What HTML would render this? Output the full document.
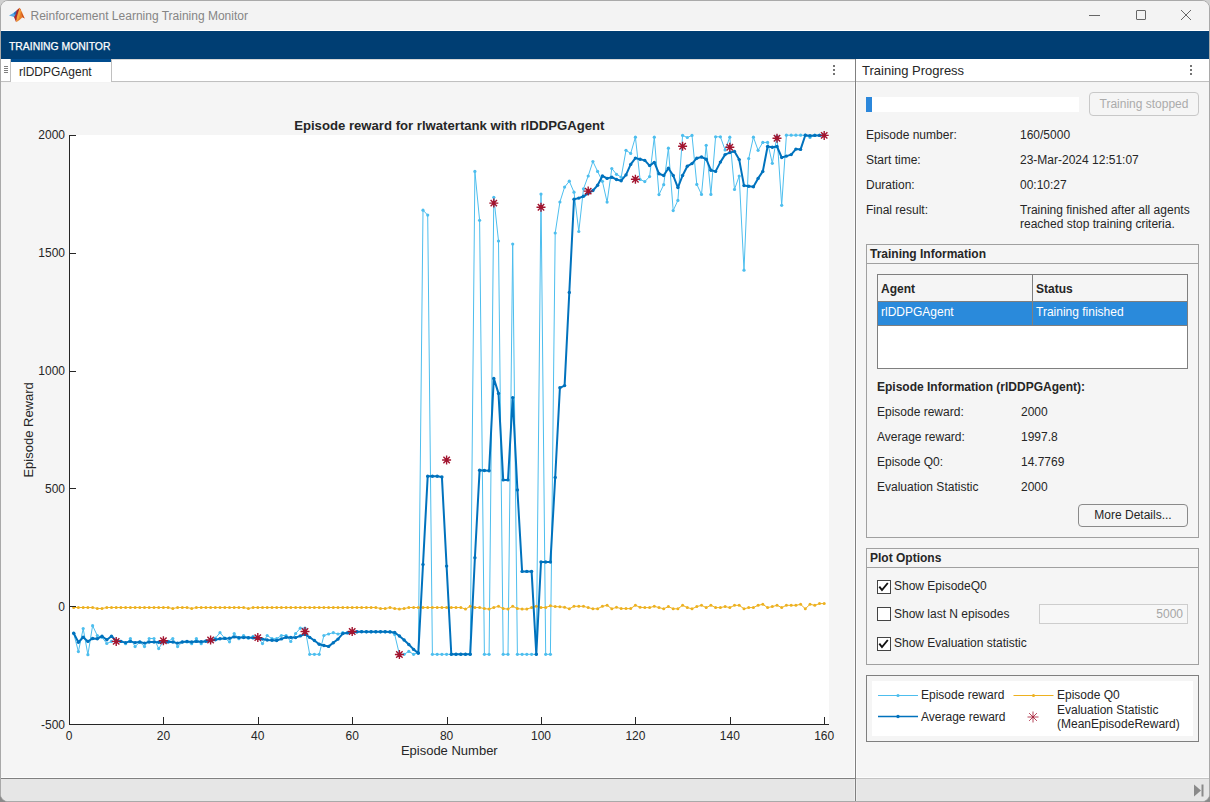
<!DOCTYPE html>
<html><head><meta charset="utf-8">
<style>
*{box-sizing:border-box;margin:0;padding:0}
html,body{width:1210px;height:802px;overflow:hidden;background:linear-gradient(#d0d0d0,#8a8a8a);font-family:"Liberation Sans",sans-serif;color:#262626}
.a{position:absolute}
.win{position:absolute;left:0;top:0;width:1210px;height:802px;border:1px solid #a9a9a9;border-radius:8px;background:#f3f3f3;overflow:hidden}
.t12{font-size:12px;white-space:nowrap;line-height:14px}
.t13{font-size:13px;white-space:nowrap;line-height:15px}
.panel{position:absolute;border:1px solid #a0a0a0;background:#f5f5f5}
.ptitle{position:absolute;left:0;top:0;right:0;height:19px;border-bottom:1px solid #a0a0a0;font-weight:bold;font-size:12px;padding-left:3px;line-height:18px;white-space:nowrap}
.cb{position:absolute;width:14px;height:14px;border:1px solid #444;background:#fff}
.btn{position:absolute;border:1px solid #a9a9a9;border-radius:4px;background:#f5f5f5;font-size:12px;text-align:center;white-space:nowrap}
</style></head><body>
<div class="win">
  <!-- title bar -->
  <div class="a" style="left:0;top:0;width:1208px;height:29px;background:#f3f3f3"></div>
  <svg class="a" style="left:6.25px;top:5px" width="20" height="18" viewBox="0 0 20 18">
    <path d="M2 9.6 L6.5 7 L9 6.6 L11 7.5 L8 11.5 L5.5 10.5 Z" fill="#55a8e6"/>
    <path d="M6.5 7 L9.5 4.5 L11 7.5 L8 9 Z" fill="#2d6fb8"/>
    <path d="M9.5 4.5 L12.6 1.8 L14 4 L11.5 10 L9 16 L7 11 L9 8 Z" fill="#a8282e"/>
    <path d="M12.6 1.8 L15 6 L17.7 12.6 L15.5 11.2 L12.5 14 L9.2 16.2 L11 10 Z" fill="#e9802a"/>
    <path d="M12.6 1.8 L13.8 5.5 L12 12 L9.2 16.2 L9.8 11 Z" fill="#f3a33d"/>
    <path d="M13.8 5.5 L17.7 12.6 L15.5 11.2 Z" fill="#c94a22"/>
  </svg>
  <div class="a" style="left:29.5px;top:8px;font-size:12px;color:#858585;white-space:nowrap">Reinforcement Learning Training Monitor</div>
  <div class="a" style="left:1088px;top:14px;width:11px;height:1px;background:#666"></div>
  <div class="a" style="left:1134.5px;top:9px;width:10px;height:10px;border:1px solid #666;border-radius:1px"></div>
  <svg class="a" style="left:1179.3px;top:7.5px" width="12" height="12"><path d="M1 1L11 11M11 1L1 11" stroke="#666" stroke-width="1"/></svg>
  <div class="a" style="left:0;top:29px;width:1208px;height:1px;background:#ffffff"></div>
  <!-- header -->
  <div class="a" style="left:0;top:30px;width:1208px;height:28px;background:#003e73"></div>
  <div class="a" style="left:8px;top:40px;font-size:10.4px;color:#fff;white-space:nowrap;-webkit-text-stroke:0.25px #fff">TRAINING MONITOR</div>
  <!-- tab strip left -->
  <div class="a" style="left:0;top:58px;width:854px;height:23px;background:#fff;border-bottom:1px solid #c8c8c8"></div>
  <div class="a" style="left:0;top:58px;width:10px;height:23px;background:#fff;border-right:1px solid #c0c0c0;border-bottom:1px solid #c0c0c0"></div>
  <div class="a" style="left:3px;top:65px;width:4px;height:1px;background:#808080;box-shadow:0 2px 0 #808080,0 4px 0 #808080,0 6px 0 #808080"></div>
  <div class="a" style="left:10px;top:58px;width:100px;height:23px;background:#fff;border-top:3px solid #004c8f"></div>
  <div class="a t12" style="left:18px;top:64px">rlDDPGAgent</div>
  <div class="a" style="left:110px;top:58px;width:744px;height:23px;border-left:1px solid #c0c0c0;border-bottom:1px solid #c0c0c0;border-top:1px solid #d8d8d8"></div>
  <div class="a" style="left:832px;top:64px;width:2px;height:2px;background:#747474;box-shadow:0 4px 0 #747474,0 8px 0 #747474"></div>
  <!-- left content -->
  <div class="a" style="left:0;top:82px;width:854px;height:695px;background:#f5f5f5"></div>
  <svg width="1210" height="802" style="position:absolute;left:-1px;top:-1px">
<rect x="70" y="135" width="759" height="589" fill="#fff"/>
<polyline points="73.7,633.3 78.4,651.6 83.2,628.6 87.9,654.7 92.6,625.7 97.3,635.6 102.0,637.3 106.8,643.5 111.5,641.4 116.2,641.4 120.9,641.4 125.6,643.7 130.4,638.5 135.1,646.6 139.8,642.0 144.5,646.6 149.2,638.5 154.0,638.5 158.7,648.6 163.4,641.4 168.1,641.4 172.8,638.5 177.6,646.6 182.3,642.0 187.0,642.0 191.7,643.7 196.4,638.5 201.2,643.7 205.9,640.9 210.6,640.0 215.3,638.2 220.0,632.7 224.8,638.2 229.5,641.8 234.2,633.6 238.9,638.7 243.6,635.5 248.4,638.2 253.1,636.4 257.8,637.3 262.5,643.6 267.2,635.5 272.0,638.7 276.7,638.7 281.4,635.5 286.1,635.5 290.8,641.5 295.6,633.6 300.3,628.2 305.0,628.2 309.7,654.3 314.4,654.3 319.2,654.3 323.9,635.5 328.6,634.0 333.3,632.7 338.0,634.0 342.8,632.7 347.5,632.7 352.2,631.8 356.9,631.8 361.6,631.5 366.4,631.8 371.1,631.8 375.8,631.8 380.5,631.8 385.2,631.8 390.0,631.5 394.7,634.5 399.4,654.3 404.1,654.3 408.8,651.4 413.6,654.3 418.3,652.5 423.0,210.2 427.7,215.1 432.4,654.3 437.2,654.3 441.9,654.3 446.6,654.3 451.3,654.3 456.0,654.3 460.8,654.3 465.5,654.3 470.2,654.3 474.9,171.4 479.6,220.3 484.4,654.3 489.1,654.3 493.8,197.3 498.5,241.0 503.2,654.3 508.0,654.3 512.7,244.0 517.4,654.3 522.1,654.3 526.8,654.3 531.6,654.3 536.3,654.3 541.0,194.1 545.7,654.3 550.4,654.3 555.2,233.0 559.9,202.0 564.6,187.1 569.3,181.2 574.0,192.2 578.8,231.5 583.5,188.8 588.2,176.0 592.9,161.5 597.6,171.4 602.4,181.3 607.1,202.1 611.8,168.5 616.5,174.3 621.2,177.2 626.0,150.3 630.7,153.4 635.4,137.2 640.1,179.5 644.8,181.6 649.6,176.6 654.3,137.2 659.0,194.6 663.7,184.7 668.4,148.2 673.2,210.6 677.9,200.4 682.6,135.4 687.3,137.5 692.0,135.4 696.8,184.4 701.5,194.4 706.2,145.3 710.9,194.4 715.6,136.8 720.4,136.8 725.1,150.0 729.8,137.2 734.5,189.4 739.2,176.0 744.0,270.2 748.7,158.6 753.4,137.2 758.1,150.3 762.8,142.4 767.6,142.4 772.3,163.3 777.0,136.0 781.7,205.3 786.4,135.2 791.2,135.2 795.9,135.2 800.6,135.2 805.3,135.2 810.0,137.5 814.8,135.2 819.5,135.2 824.2,135.2" fill="none" stroke="#4dbeee" stroke-width="1" stroke-linejoin="round"/>
<g fill="#4dbeee"><circle cx="73.7" cy="633.3" r="1.6"/><circle cx="78.4" cy="651.6" r="1.6"/><circle cx="83.2" cy="628.6" r="1.6"/><circle cx="87.9" cy="654.7" r="1.6"/><circle cx="92.6" cy="625.7" r="1.6"/><circle cx="97.3" cy="635.6" r="1.6"/><circle cx="102.0" cy="637.3" r="1.6"/><circle cx="106.8" cy="643.5" r="1.6"/><circle cx="111.5" cy="641.4" r="1.6"/><circle cx="116.2" cy="641.4" r="1.6"/><circle cx="120.9" cy="641.4" r="1.6"/><circle cx="125.6" cy="643.7" r="1.6"/><circle cx="130.4" cy="638.5" r="1.6"/><circle cx="135.1" cy="646.6" r="1.6"/><circle cx="139.8" cy="642.0" r="1.6"/><circle cx="144.5" cy="646.6" r="1.6"/><circle cx="149.2" cy="638.5" r="1.6"/><circle cx="154.0" cy="638.5" r="1.6"/><circle cx="158.7" cy="648.6" r="1.6"/><circle cx="163.4" cy="641.4" r="1.6"/><circle cx="168.1" cy="641.4" r="1.6"/><circle cx="172.8" cy="638.5" r="1.6"/><circle cx="177.6" cy="646.6" r="1.6"/><circle cx="182.3" cy="642.0" r="1.6"/><circle cx="187.0" cy="642.0" r="1.6"/><circle cx="191.7" cy="643.7" r="1.6"/><circle cx="196.4" cy="638.5" r="1.6"/><circle cx="201.2" cy="643.7" r="1.6"/><circle cx="205.9" cy="640.9" r="1.6"/><circle cx="210.6" cy="640.0" r="1.6"/><circle cx="215.3" cy="638.2" r="1.6"/><circle cx="220.0" cy="632.7" r="1.6"/><circle cx="224.8" cy="638.2" r="1.6"/><circle cx="229.5" cy="641.8" r="1.6"/><circle cx="234.2" cy="633.6" r="1.6"/><circle cx="238.9" cy="638.7" r="1.6"/><circle cx="243.6" cy="635.5" r="1.6"/><circle cx="248.4" cy="638.2" r="1.6"/><circle cx="253.1" cy="636.4" r="1.6"/><circle cx="257.8" cy="637.3" r="1.6"/><circle cx="262.5" cy="643.6" r="1.6"/><circle cx="267.2" cy="635.5" r="1.6"/><circle cx="272.0" cy="638.7" r="1.6"/><circle cx="276.7" cy="638.7" r="1.6"/><circle cx="281.4" cy="635.5" r="1.6"/><circle cx="286.1" cy="635.5" r="1.6"/><circle cx="290.8" cy="641.5" r="1.6"/><circle cx="295.6" cy="633.6" r="1.6"/><circle cx="300.3" cy="628.2" r="1.6"/><circle cx="305.0" cy="628.2" r="1.6"/><circle cx="309.7" cy="654.3" r="1.6"/><circle cx="314.4" cy="654.3" r="1.6"/><circle cx="319.2" cy="654.3" r="1.6"/><circle cx="323.9" cy="635.5" r="1.6"/><circle cx="328.6" cy="634.0" r="1.6"/><circle cx="333.3" cy="632.7" r="1.6"/><circle cx="338.0" cy="634.0" r="1.6"/><circle cx="342.8" cy="632.7" r="1.6"/><circle cx="347.5" cy="632.7" r="1.6"/><circle cx="352.2" cy="631.8" r="1.6"/><circle cx="356.9" cy="631.8" r="1.6"/><circle cx="361.6" cy="631.5" r="1.6"/><circle cx="366.4" cy="631.8" r="1.6"/><circle cx="371.1" cy="631.8" r="1.6"/><circle cx="375.8" cy="631.8" r="1.6"/><circle cx="380.5" cy="631.8" r="1.6"/><circle cx="385.2" cy="631.8" r="1.6"/><circle cx="390.0" cy="631.5" r="1.6"/><circle cx="394.7" cy="634.5" r="1.6"/><circle cx="399.4" cy="654.3" r="1.6"/><circle cx="404.1" cy="654.3" r="1.6"/><circle cx="408.8" cy="651.4" r="1.6"/><circle cx="413.6" cy="654.3" r="1.6"/><circle cx="418.3" cy="652.5" r="1.6"/><circle cx="423.0" cy="210.2" r="1.6"/><circle cx="427.7" cy="215.1" r="1.6"/><circle cx="432.4" cy="654.3" r="1.6"/><circle cx="437.2" cy="654.3" r="1.6"/><circle cx="441.9" cy="654.3" r="1.6"/><circle cx="446.6" cy="654.3" r="1.6"/><circle cx="451.3" cy="654.3" r="1.6"/><circle cx="456.0" cy="654.3" r="1.6"/><circle cx="460.8" cy="654.3" r="1.6"/><circle cx="465.5" cy="654.3" r="1.6"/><circle cx="470.2" cy="654.3" r="1.6"/><circle cx="474.9" cy="171.4" r="1.6"/><circle cx="479.6" cy="220.3" r="1.6"/><circle cx="484.4" cy="654.3" r="1.6"/><circle cx="489.1" cy="654.3" r="1.6"/><circle cx="493.8" cy="197.3" r="1.6"/><circle cx="498.5" cy="241.0" r="1.6"/><circle cx="503.2" cy="654.3" r="1.6"/><circle cx="508.0" cy="654.3" r="1.6"/><circle cx="512.7" cy="244.0" r="1.6"/><circle cx="517.4" cy="654.3" r="1.6"/><circle cx="522.1" cy="654.3" r="1.6"/><circle cx="526.8" cy="654.3" r="1.6"/><circle cx="531.6" cy="654.3" r="1.6"/><circle cx="536.3" cy="654.3" r="1.6"/><circle cx="541.0" cy="194.1" r="1.6"/><circle cx="545.7" cy="654.3" r="1.6"/><circle cx="550.4" cy="654.3" r="1.6"/><circle cx="555.2" cy="233.0" r="1.6"/><circle cx="559.9" cy="202.0" r="1.6"/><circle cx="564.6" cy="187.1" r="1.6"/><circle cx="569.3" cy="181.2" r="1.6"/><circle cx="574.0" cy="192.2" r="1.6"/><circle cx="578.8" cy="231.5" r="1.6"/><circle cx="583.5" cy="188.8" r="1.6"/><circle cx="588.2" cy="176.0" r="1.6"/><circle cx="592.9" cy="161.5" r="1.6"/><circle cx="597.6" cy="171.4" r="1.6"/><circle cx="602.4" cy="181.3" r="1.6"/><circle cx="607.1" cy="202.1" r="1.6"/><circle cx="611.8" cy="168.5" r="1.6"/><circle cx="616.5" cy="174.3" r="1.6"/><circle cx="621.2" cy="177.2" r="1.6"/><circle cx="626.0" cy="150.3" r="1.6"/><circle cx="630.7" cy="153.4" r="1.6"/><circle cx="635.4" cy="137.2" r="1.6"/><circle cx="640.1" cy="179.5" r="1.6"/><circle cx="644.8" cy="181.6" r="1.6"/><circle cx="649.6" cy="176.6" r="1.6"/><circle cx="654.3" cy="137.2" r="1.6"/><circle cx="659.0" cy="194.6" r="1.6"/><circle cx="663.7" cy="184.7" r="1.6"/><circle cx="668.4" cy="148.2" r="1.6"/><circle cx="673.2" cy="210.6" r="1.6"/><circle cx="677.9" cy="200.4" r="1.6"/><circle cx="682.6" cy="135.4" r="1.6"/><circle cx="687.3" cy="137.5" r="1.6"/><circle cx="692.0" cy="135.4" r="1.6"/><circle cx="696.8" cy="184.4" r="1.6"/><circle cx="701.5" cy="194.4" r="1.6"/><circle cx="706.2" cy="145.3" r="1.6"/><circle cx="710.9" cy="194.4" r="1.6"/><circle cx="715.6" cy="136.8" r="1.6"/><circle cx="720.4" cy="136.8" r="1.6"/><circle cx="725.1" cy="150.0" r="1.6"/><circle cx="729.8" cy="137.2" r="1.6"/><circle cx="734.5" cy="189.4" r="1.6"/><circle cx="739.2" cy="176.0" r="1.6"/><circle cx="744.0" cy="270.2" r="1.6"/><circle cx="748.7" cy="158.6" r="1.6"/><circle cx="753.4" cy="137.2" r="1.6"/><circle cx="758.1" cy="150.3" r="1.6"/><circle cx="762.8" cy="142.4" r="1.6"/><circle cx="767.6" cy="142.4" r="1.6"/><circle cx="772.3" cy="163.3" r="1.6"/><circle cx="777.0" cy="136.0" r="1.6"/><circle cx="781.7" cy="205.3" r="1.6"/><circle cx="786.4" cy="135.2" r="1.6"/><circle cx="791.2" cy="135.2" r="1.6"/><circle cx="795.9" cy="135.2" r="1.6"/><circle cx="800.6" cy="135.2" r="1.6"/><circle cx="805.3" cy="135.2" r="1.6"/><circle cx="810.0" cy="137.5" r="1.6"/><circle cx="814.8" cy="135.2" r="1.6"/><circle cx="819.5" cy="135.2" r="1.6"/><circle cx="824.2" cy="135.2" r="1.6"/></g>
<polyline points="73.7,607.5 78.4,607.5 83.2,607.5 87.9,607.5 92.6,607.5 97.3,608.5 102.0,608.5 106.8,607.5 111.5,607.5 116.2,607.5 120.9,607.5 125.6,607.5 130.4,607.5 135.1,607.5 139.8,607.5 144.5,607.5 149.2,607.5 154.0,607.5 158.7,607.5 163.4,607.5 168.1,607.5 172.8,608.5 177.6,607.5 182.3,607.5 187.0,607.5 191.7,608.5 196.4,607.5 201.2,607.5 205.9,607.5 210.6,607.5 215.3,607.5 220.0,607.5 224.8,607.5 229.5,607.5 234.2,607.5 238.9,607.5 243.6,607.5 248.4,608.5 253.1,607.5 257.8,607.5 262.5,607.5 267.2,607.5 272.0,607.5 276.7,607.5 281.4,607.5 286.1,607.5 290.8,607.5 295.6,607.5 300.3,607.5 305.0,607.5 309.7,607.5 314.4,607.5 319.2,607.5 323.9,607.5 328.6,607.5 333.3,607.5 338.0,607.5 342.8,607.5 347.5,607.5 352.2,607.5 356.9,607.5 361.6,607.5 366.4,607.5 371.1,607.5 375.8,607.5 380.5,608.5 385.2,608.6 390.0,607.5 394.7,608.6 399.4,609.1 404.1,608.6 408.8,607.5 413.6,607.5 418.3,607.5 423.0,607.5 427.7,607.5 432.4,607.5 437.2,607.5 441.9,607.5 446.6,607.5 451.3,607.5 456.0,607.5 460.8,607.5 465.5,609.1 470.2,606.3 474.9,607.5 479.6,607.5 484.4,608.6 489.1,609.1 493.8,607.5 498.5,606.3 503.2,608.6 508.0,609.1 512.7,606.3 517.4,608.6 522.1,609.1 526.8,609.1 531.6,607.5 536.3,606.3 541.0,607.5 545.7,607.5 550.4,605.8 555.2,606.6 559.9,606.8 564.6,607.3 569.3,608.8 574.0,606.3 578.8,606.3 583.5,606.3 588.2,607.6 592.9,608.8 597.6,608.8 602.4,606.3 607.1,605.3 611.8,608.8 616.5,607.3 621.2,608.6 626.0,608.6 630.7,608.6 635.4,605.3 640.1,607.3 644.8,607.6 649.6,607.6 654.3,606.3 659.0,607.6 663.7,608.8 668.4,606.6 673.2,608.8 677.9,608.8 682.6,605.3 687.3,607.6 692.0,608.8 696.8,606.6 701.5,605.3 706.2,607.6 710.9,605.3 715.6,607.6 720.4,607.6 725.1,606.6 729.8,607.6 734.5,605.3 739.2,605.3 744.0,608.8 748.7,607.6 753.4,607.6 758.1,605.3 762.8,604.3 767.6,607.6 772.3,606.6 777.0,605.3 781.7,607.6 786.4,605.3 791.2,605.3 795.9,605.3 800.6,604.3 805.3,608.8 810.0,604.3 814.8,605.3 819.5,603.6 824.2,603.6" fill="none" stroke="#edb120" stroke-width="1" stroke-linejoin="round"/>
<g fill="#edb120"><circle cx="73.7" cy="607.5" r="1.5"/><circle cx="78.4" cy="607.5" r="1.5"/><circle cx="83.2" cy="607.5" r="1.5"/><circle cx="87.9" cy="607.5" r="1.5"/><circle cx="92.6" cy="607.5" r="1.5"/><circle cx="97.3" cy="608.5" r="1.5"/><circle cx="102.0" cy="608.5" r="1.5"/><circle cx="106.8" cy="607.5" r="1.5"/><circle cx="111.5" cy="607.5" r="1.5"/><circle cx="116.2" cy="607.5" r="1.5"/><circle cx="120.9" cy="607.5" r="1.5"/><circle cx="125.6" cy="607.5" r="1.5"/><circle cx="130.4" cy="607.5" r="1.5"/><circle cx="135.1" cy="607.5" r="1.5"/><circle cx="139.8" cy="607.5" r="1.5"/><circle cx="144.5" cy="607.5" r="1.5"/><circle cx="149.2" cy="607.5" r="1.5"/><circle cx="154.0" cy="607.5" r="1.5"/><circle cx="158.7" cy="607.5" r="1.5"/><circle cx="163.4" cy="607.5" r="1.5"/><circle cx="168.1" cy="607.5" r="1.5"/><circle cx="172.8" cy="608.5" r="1.5"/><circle cx="177.6" cy="607.5" r="1.5"/><circle cx="182.3" cy="607.5" r="1.5"/><circle cx="187.0" cy="607.5" r="1.5"/><circle cx="191.7" cy="608.5" r="1.5"/><circle cx="196.4" cy="607.5" r="1.5"/><circle cx="201.2" cy="607.5" r="1.5"/><circle cx="205.9" cy="607.5" r="1.5"/><circle cx="210.6" cy="607.5" r="1.5"/><circle cx="215.3" cy="607.5" r="1.5"/><circle cx="220.0" cy="607.5" r="1.5"/><circle cx="224.8" cy="607.5" r="1.5"/><circle cx="229.5" cy="607.5" r="1.5"/><circle cx="234.2" cy="607.5" r="1.5"/><circle cx="238.9" cy="607.5" r="1.5"/><circle cx="243.6" cy="607.5" r="1.5"/><circle cx="248.4" cy="608.5" r="1.5"/><circle cx="253.1" cy="607.5" r="1.5"/><circle cx="257.8" cy="607.5" r="1.5"/><circle cx="262.5" cy="607.5" r="1.5"/><circle cx="267.2" cy="607.5" r="1.5"/><circle cx="272.0" cy="607.5" r="1.5"/><circle cx="276.7" cy="607.5" r="1.5"/><circle cx="281.4" cy="607.5" r="1.5"/><circle cx="286.1" cy="607.5" r="1.5"/><circle cx="290.8" cy="607.5" r="1.5"/><circle cx="295.6" cy="607.5" r="1.5"/><circle cx="300.3" cy="607.5" r="1.5"/><circle cx="305.0" cy="607.5" r="1.5"/><circle cx="309.7" cy="607.5" r="1.5"/><circle cx="314.4" cy="607.5" r="1.5"/><circle cx="319.2" cy="607.5" r="1.5"/><circle cx="323.9" cy="607.5" r="1.5"/><circle cx="328.6" cy="607.5" r="1.5"/><circle cx="333.3" cy="607.5" r="1.5"/><circle cx="338.0" cy="607.5" r="1.5"/><circle cx="342.8" cy="607.5" r="1.5"/><circle cx="347.5" cy="607.5" r="1.5"/><circle cx="352.2" cy="607.5" r="1.5"/><circle cx="356.9" cy="607.5" r="1.5"/><circle cx="361.6" cy="607.5" r="1.5"/><circle cx="366.4" cy="607.5" r="1.5"/><circle cx="371.1" cy="607.5" r="1.5"/><circle cx="375.8" cy="607.5" r="1.5"/><circle cx="380.5" cy="608.5" r="1.5"/><circle cx="385.2" cy="608.6" r="1.5"/><circle cx="390.0" cy="607.5" r="1.5"/><circle cx="394.7" cy="608.6" r="1.5"/><circle cx="399.4" cy="609.1" r="1.5"/><circle cx="404.1" cy="608.6" r="1.5"/><circle cx="408.8" cy="607.5" r="1.5"/><circle cx="413.6" cy="607.5" r="1.5"/><circle cx="418.3" cy="607.5" r="1.5"/><circle cx="423.0" cy="607.5" r="1.5"/><circle cx="427.7" cy="607.5" r="1.5"/><circle cx="432.4" cy="607.5" r="1.5"/><circle cx="437.2" cy="607.5" r="1.5"/><circle cx="441.9" cy="607.5" r="1.5"/><circle cx="446.6" cy="607.5" r="1.5"/><circle cx="451.3" cy="607.5" r="1.5"/><circle cx="456.0" cy="607.5" r="1.5"/><circle cx="460.8" cy="607.5" r="1.5"/><circle cx="465.5" cy="609.1" r="1.5"/><circle cx="470.2" cy="606.3" r="1.5"/><circle cx="474.9" cy="607.5" r="1.5"/><circle cx="479.6" cy="607.5" r="1.5"/><circle cx="484.4" cy="608.6" r="1.5"/><circle cx="489.1" cy="609.1" r="1.5"/><circle cx="493.8" cy="607.5" r="1.5"/><circle cx="498.5" cy="606.3" r="1.5"/><circle cx="503.2" cy="608.6" r="1.5"/><circle cx="508.0" cy="609.1" r="1.5"/><circle cx="512.7" cy="606.3" r="1.5"/><circle cx="517.4" cy="608.6" r="1.5"/><circle cx="522.1" cy="609.1" r="1.5"/><circle cx="526.8" cy="609.1" r="1.5"/><circle cx="531.6" cy="607.5" r="1.5"/><circle cx="536.3" cy="606.3" r="1.5"/><circle cx="541.0" cy="607.5" r="1.5"/><circle cx="545.7" cy="607.5" r="1.5"/><circle cx="550.4" cy="605.8" r="1.5"/><circle cx="555.2" cy="606.6" r="1.5"/><circle cx="559.9" cy="606.8" r="1.5"/><circle cx="564.6" cy="607.3" r="1.5"/><circle cx="569.3" cy="608.8" r="1.5"/><circle cx="574.0" cy="606.3" r="1.5"/><circle cx="578.8" cy="606.3" r="1.5"/><circle cx="583.5" cy="606.3" r="1.5"/><circle cx="588.2" cy="607.6" r="1.5"/><circle cx="592.9" cy="608.8" r="1.5"/><circle cx="597.6" cy="608.8" r="1.5"/><circle cx="602.4" cy="606.3" r="1.5"/><circle cx="607.1" cy="605.3" r="1.5"/><circle cx="611.8" cy="608.8" r="1.5"/><circle cx="616.5" cy="607.3" r="1.5"/><circle cx="621.2" cy="608.6" r="1.5"/><circle cx="626.0" cy="608.6" r="1.5"/><circle cx="630.7" cy="608.6" r="1.5"/><circle cx="635.4" cy="605.3" r="1.5"/><circle cx="640.1" cy="607.3" r="1.5"/><circle cx="644.8" cy="607.6" r="1.5"/><circle cx="649.6" cy="607.6" r="1.5"/><circle cx="654.3" cy="606.3" r="1.5"/><circle cx="659.0" cy="607.6" r="1.5"/><circle cx="663.7" cy="608.8" r="1.5"/><circle cx="668.4" cy="606.6" r="1.5"/><circle cx="673.2" cy="608.8" r="1.5"/><circle cx="677.9" cy="608.8" r="1.5"/><circle cx="682.6" cy="605.3" r="1.5"/><circle cx="687.3" cy="607.6" r="1.5"/><circle cx="692.0" cy="608.8" r="1.5"/><circle cx="696.8" cy="606.6" r="1.5"/><circle cx="701.5" cy="605.3" r="1.5"/><circle cx="706.2" cy="607.6" r="1.5"/><circle cx="710.9" cy="605.3" r="1.5"/><circle cx="715.6" cy="607.6" r="1.5"/><circle cx="720.4" cy="607.6" r="1.5"/><circle cx="725.1" cy="606.6" r="1.5"/><circle cx="729.8" cy="607.6" r="1.5"/><circle cx="734.5" cy="605.3" r="1.5"/><circle cx="739.2" cy="605.3" r="1.5"/><circle cx="744.0" cy="608.8" r="1.5"/><circle cx="748.7" cy="607.6" r="1.5"/><circle cx="753.4" cy="607.6" r="1.5"/><circle cx="758.1" cy="605.3" r="1.5"/><circle cx="762.8" cy="604.3" r="1.5"/><circle cx="767.6" cy="607.6" r="1.5"/><circle cx="772.3" cy="606.6" r="1.5"/><circle cx="777.0" cy="605.3" r="1.5"/><circle cx="781.7" cy="607.6" r="1.5"/><circle cx="786.4" cy="605.3" r="1.5"/><circle cx="791.2" cy="605.3" r="1.5"/><circle cx="795.9" cy="605.3" r="1.5"/><circle cx="800.6" cy="604.3" r="1.5"/><circle cx="805.3" cy="608.8" r="1.5"/><circle cx="810.0" cy="604.3" r="1.5"/><circle cx="814.8" cy="605.3" r="1.5"/><circle cx="819.5" cy="603.6" r="1.5"/><circle cx="824.2" cy="603.6" r="1.5"/></g>
<polyline points="73.7,633.3 78.4,642.3 83.2,637.3 87.9,641.4 92.6,638.5 97.3,638.8 102.0,636.2 106.8,639.7 111.5,636.2 116.2,640.8 120.9,641.4 125.6,642.6 130.4,641.4 135.1,642.6 139.8,642.0 144.5,643.1 149.2,642.0 154.0,642.0 158.7,642.3 163.4,642.0 168.1,642.0 172.8,642.0 177.6,643.1 182.3,642.0 187.0,641.4 191.7,642.0 196.4,641.4 201.2,641.8 205.9,641.3 210.6,640.9 215.3,639.8 220.0,638.7 224.8,638.4 229.5,638.2 234.2,636.9 238.9,637.6 243.6,637.6 248.4,637.6 253.1,637.9 257.8,638.2 262.5,639.1 267.2,640.0 272.0,640.2 276.7,640.5 281.4,638.9 286.1,637.3 290.8,637.4 295.6,637.6 300.3,635.9 305.0,634.2 309.7,637.4 314.4,640.5 319.2,644.2 323.9,645.5 328.6,646.4 333.3,642.7 338.0,639.1 342.8,633.6 347.5,632.9 352.2,632.2 356.9,631.8 361.6,631.8 366.4,631.8 371.1,631.8 375.8,631.8 380.5,631.8 385.2,631.8 390.0,632.0 394.7,632.5 399.4,636.0 404.1,640.0 408.8,644.5 413.6,649.4 418.3,653.2 423.0,564.5 427.7,476.3 432.4,476.3 437.2,476.3 441.9,476.9 446.6,566.1 451.3,654.3 456.0,654.3 460.8,654.3 465.5,654.3 470.2,654.3 474.9,557.8 479.6,470.3 484.4,470.5 489.1,470.8 493.8,378.4 498.5,393.4 503.2,479.9 508.0,479.9 512.7,397.6 517.4,489.9 522.1,571.4 526.8,571.4 531.6,571.4 536.3,654.3 541.0,562.0 545.7,562.0 550.4,562.0 555.2,477.4 559.9,387.8 564.6,385.6 569.3,292.5 574.0,199.2 578.8,198.1 583.5,196.3 588.2,193.4 592.9,190.5 597.6,185.3 602.4,176.0 607.1,178.4 611.8,177.2 616.5,179.5 621.2,180.7 626.0,174.9 630.7,164.4 635.4,158.1 640.1,159.2 644.8,160.4 649.6,165.6 654.3,162.4 659.0,173.7 663.7,175.5 668.4,168.2 673.2,175.5 677.9,187.6 682.6,175.5 687.3,166.2 692.0,163.6 696.8,158.2 701.5,157.0 706.2,159.2 710.9,170.2 715.6,171.4 720.4,162.1 725.1,154.6 729.8,152.6 734.5,151.4 739.2,159.6 744.0,185.6 748.7,186.2 753.4,186.7 758.1,178.4 762.8,171.4 767.6,146.5 772.3,147.3 777.0,146.5 781.7,157.5 786.4,156.1 791.2,154.6 795.9,149.1 800.6,149.4 805.3,135.2 810.0,135.7 814.8,135.4 819.5,135.4 824.2,135.4" fill="none" stroke="#0072bd" stroke-width="2" stroke-linejoin="round"/>
<g fill="#0072bd"><circle cx="73.7" cy="633.3" r="1.7"/><circle cx="78.4" cy="642.3" r="1.7"/><circle cx="83.2" cy="637.3" r="1.7"/><circle cx="87.9" cy="641.4" r="1.7"/><circle cx="92.6" cy="638.5" r="1.7"/><circle cx="97.3" cy="638.8" r="1.7"/><circle cx="102.0" cy="636.2" r="1.7"/><circle cx="106.8" cy="639.7" r="1.7"/><circle cx="111.5" cy="636.2" r="1.7"/><circle cx="116.2" cy="640.8" r="1.7"/><circle cx="120.9" cy="641.4" r="1.7"/><circle cx="125.6" cy="642.6" r="1.7"/><circle cx="130.4" cy="641.4" r="1.7"/><circle cx="135.1" cy="642.6" r="1.7"/><circle cx="139.8" cy="642.0" r="1.7"/><circle cx="144.5" cy="643.1" r="1.7"/><circle cx="149.2" cy="642.0" r="1.7"/><circle cx="154.0" cy="642.0" r="1.7"/><circle cx="158.7" cy="642.3" r="1.7"/><circle cx="163.4" cy="642.0" r="1.7"/><circle cx="168.1" cy="642.0" r="1.7"/><circle cx="172.8" cy="642.0" r="1.7"/><circle cx="177.6" cy="643.1" r="1.7"/><circle cx="182.3" cy="642.0" r="1.7"/><circle cx="187.0" cy="641.4" r="1.7"/><circle cx="191.7" cy="642.0" r="1.7"/><circle cx="196.4" cy="641.4" r="1.7"/><circle cx="201.2" cy="641.8" r="1.7"/><circle cx="205.9" cy="641.3" r="1.7"/><circle cx="210.6" cy="640.9" r="1.7"/><circle cx="215.3" cy="639.8" r="1.7"/><circle cx="220.0" cy="638.7" r="1.7"/><circle cx="224.8" cy="638.4" r="1.7"/><circle cx="229.5" cy="638.2" r="1.7"/><circle cx="234.2" cy="636.9" r="1.7"/><circle cx="238.9" cy="637.6" r="1.7"/><circle cx="243.6" cy="637.6" r="1.7"/><circle cx="248.4" cy="637.6" r="1.7"/><circle cx="253.1" cy="637.9" r="1.7"/><circle cx="257.8" cy="638.2" r="1.7"/><circle cx="262.5" cy="639.1" r="1.7"/><circle cx="267.2" cy="640.0" r="1.7"/><circle cx="272.0" cy="640.2" r="1.7"/><circle cx="276.7" cy="640.5" r="1.7"/><circle cx="281.4" cy="638.9" r="1.7"/><circle cx="286.1" cy="637.3" r="1.7"/><circle cx="290.8" cy="637.4" r="1.7"/><circle cx="295.6" cy="637.6" r="1.7"/><circle cx="300.3" cy="635.9" r="1.7"/><circle cx="305.0" cy="634.2" r="1.7"/><circle cx="309.7" cy="637.4" r="1.7"/><circle cx="314.4" cy="640.5" r="1.7"/><circle cx="319.2" cy="644.2" r="1.7"/><circle cx="323.9" cy="645.5" r="1.7"/><circle cx="328.6" cy="646.4" r="1.7"/><circle cx="333.3" cy="642.7" r="1.7"/><circle cx="338.0" cy="639.1" r="1.7"/><circle cx="342.8" cy="633.6" r="1.7"/><circle cx="347.5" cy="632.9" r="1.7"/><circle cx="352.2" cy="632.2" r="1.7"/><circle cx="356.9" cy="631.8" r="1.7"/><circle cx="361.6" cy="631.8" r="1.7"/><circle cx="366.4" cy="631.8" r="1.7"/><circle cx="371.1" cy="631.8" r="1.7"/><circle cx="375.8" cy="631.8" r="1.7"/><circle cx="380.5" cy="631.8" r="1.7"/><circle cx="385.2" cy="631.8" r="1.7"/><circle cx="390.0" cy="632.0" r="1.7"/><circle cx="394.7" cy="632.5" r="1.7"/><circle cx="399.4" cy="636.0" r="1.7"/><circle cx="404.1" cy="640.0" r="1.7"/><circle cx="408.8" cy="644.5" r="1.7"/><circle cx="413.6" cy="649.4" r="1.7"/><circle cx="418.3" cy="653.2" r="1.7"/><circle cx="423.0" cy="564.5" r="1.7"/><circle cx="427.7" cy="476.3" r="1.7"/><circle cx="432.4" cy="476.3" r="1.7"/><circle cx="437.2" cy="476.3" r="1.7"/><circle cx="441.9" cy="476.9" r="1.7"/><circle cx="446.6" cy="566.1" r="1.7"/><circle cx="451.3" cy="654.3" r="1.7"/><circle cx="456.0" cy="654.3" r="1.7"/><circle cx="460.8" cy="654.3" r="1.7"/><circle cx="465.5" cy="654.3" r="1.7"/><circle cx="470.2" cy="654.3" r="1.7"/><circle cx="474.9" cy="557.8" r="1.7"/><circle cx="479.6" cy="470.3" r="1.7"/><circle cx="484.4" cy="470.5" r="1.7"/><circle cx="489.1" cy="470.8" r="1.7"/><circle cx="493.8" cy="378.4" r="1.7"/><circle cx="498.5" cy="393.4" r="1.7"/><circle cx="503.2" cy="479.9" r="1.7"/><circle cx="508.0" cy="479.9" r="1.7"/><circle cx="512.7" cy="397.6" r="1.7"/><circle cx="517.4" cy="489.9" r="1.7"/><circle cx="522.1" cy="571.4" r="1.7"/><circle cx="526.8" cy="571.4" r="1.7"/><circle cx="531.6" cy="571.4" r="1.7"/><circle cx="536.3" cy="654.3" r="1.7"/><circle cx="541.0" cy="562.0" r="1.7"/><circle cx="545.7" cy="562.0" r="1.7"/><circle cx="550.4" cy="562.0" r="1.7"/><circle cx="555.2" cy="477.4" r="1.7"/><circle cx="559.9" cy="387.8" r="1.7"/><circle cx="564.6" cy="385.6" r="1.7"/><circle cx="569.3" cy="292.5" r="1.7"/><circle cx="574.0" cy="199.2" r="1.7"/><circle cx="578.8" cy="198.1" r="1.7"/><circle cx="583.5" cy="196.3" r="1.7"/><circle cx="588.2" cy="193.4" r="1.7"/><circle cx="592.9" cy="190.5" r="1.7"/><circle cx="597.6" cy="185.3" r="1.7"/><circle cx="602.4" cy="176.0" r="1.7"/><circle cx="607.1" cy="178.4" r="1.7"/><circle cx="611.8" cy="177.2" r="1.7"/><circle cx="616.5" cy="179.5" r="1.7"/><circle cx="621.2" cy="180.7" r="1.7"/><circle cx="626.0" cy="174.9" r="1.7"/><circle cx="630.7" cy="164.4" r="1.7"/><circle cx="635.4" cy="158.1" r="1.7"/><circle cx="640.1" cy="159.2" r="1.7"/><circle cx="644.8" cy="160.4" r="1.7"/><circle cx="649.6" cy="165.6" r="1.7"/><circle cx="654.3" cy="162.4" r="1.7"/><circle cx="659.0" cy="173.7" r="1.7"/><circle cx="663.7" cy="175.5" r="1.7"/><circle cx="668.4" cy="168.2" r="1.7"/><circle cx="673.2" cy="175.5" r="1.7"/><circle cx="677.9" cy="187.6" r="1.7"/><circle cx="682.6" cy="175.5" r="1.7"/><circle cx="687.3" cy="166.2" r="1.7"/><circle cx="692.0" cy="163.6" r="1.7"/><circle cx="696.8" cy="158.2" r="1.7"/><circle cx="701.5" cy="157.0" r="1.7"/><circle cx="706.2" cy="159.2" r="1.7"/><circle cx="710.9" cy="170.2" r="1.7"/><circle cx="715.6" cy="171.4" r="1.7"/><circle cx="720.4" cy="162.1" r="1.7"/><circle cx="725.1" cy="154.6" r="1.7"/><circle cx="729.8" cy="152.6" r="1.7"/><circle cx="734.5" cy="151.4" r="1.7"/><circle cx="739.2" cy="159.6" r="1.7"/><circle cx="744.0" cy="185.6" r="1.7"/><circle cx="748.7" cy="186.2" r="1.7"/><circle cx="753.4" cy="186.7" r="1.7"/><circle cx="758.1" cy="178.4" r="1.7"/><circle cx="762.8" cy="171.4" r="1.7"/><circle cx="767.6" cy="146.5" r="1.7"/><circle cx="772.3" cy="147.3" r="1.7"/><circle cx="777.0" cy="146.5" r="1.7"/><circle cx="781.7" cy="157.5" r="1.7"/><circle cx="786.4" cy="156.1" r="1.7"/><circle cx="791.2" cy="154.6" r="1.7"/><circle cx="795.9" cy="149.1" r="1.7"/><circle cx="800.6" cy="149.4" r="1.7"/><circle cx="805.3" cy="135.2" r="1.7"/><circle cx="810.0" cy="135.7" r="1.7"/><circle cx="814.8" cy="135.4" r="1.7"/><circle cx="819.5" cy="135.4" r="1.7"/><circle cx="824.2" cy="135.4" r="1.7"/></g>
<path d="M111.7 641.4H120.7M116.2 636.9V645.9M113.0 638.2L119.4 644.6M113.0 644.6L119.4 638.2M158.9 640.8H167.9M163.4 636.3V645.3M160.2 637.6L166.6 644.0M160.2 644.0L166.6 637.6M206.1 640.0H215.1M210.6 635.5V644.5M207.4 636.8L213.8 643.2M207.4 643.2L213.8 636.8M253.3 637.6H262.3M257.8 633.1V642.1M254.6 634.4L261.0 640.8M254.6 640.8L261.0 634.4M300.5 631.5H309.5M305.0 627.0V636.0M301.8 628.3L308.2 634.7M301.8 634.7L308.2 628.3M347.7 631.5H356.7M352.2 627.0V636.0M349.0 628.3L355.4 634.7M349.0 634.7L355.4 628.3M394.9 654.5H403.9M399.4 650.0V659.0M396.2 651.3L402.6 657.7M396.2 657.7L402.6 651.3M442.1 460.0H451.1M446.6 455.5V464.5M443.4 456.8L449.8 463.2M443.4 463.2L449.8 456.8M489.3 203.1H498.3M493.8 198.6V207.6M490.6 199.9L497.0 206.3M490.6 206.3L497.0 199.9M536.5 207.3H545.5M541.0 202.8V211.8M537.8 204.1L544.2 210.5M537.8 210.5L544.2 204.1M583.7 191.1H592.7M588.2 186.6V195.6M585.0 187.9L591.4 194.3M585.0 194.3L591.4 187.9M630.9 179.3H639.9M635.4 174.8V183.8M632.2 176.1L638.6 182.5M632.2 182.5L638.6 176.1M678.1 146.2H687.1M682.6 141.7V150.7M679.4 143.0L685.8 149.4M679.4 149.4L685.8 143.0M725.3 147.3H734.3M729.8 142.8V151.8M726.6 144.1L733.0 150.5M726.6 150.5L733.0 144.1M772.5 138.3H781.5M777.0 133.8V142.8M773.8 135.1L780.2 141.5M773.8 141.5L780.2 135.1M819.7 135.4H828.7M824.2 130.9V139.9M821.0 132.2L827.4 138.6M821.0 138.6L827.4 132.2" stroke="#a2142f" stroke-width="1.4" fill="none"/>
<path d="M69.5 135V724.5H829" stroke="#262626" stroke-width="1" fill="none"/>
<path d="M69.5 724V717M163.5 724V717M258.5 724V717M352.5 724V717M447.5 724V717M541.5 724V717M635.5 724V717M730.5 724V717M824.5 724V717M69 724.5H76M69 606.5H76M69 488.5H76M69 371.5H76M69 253.5H76M69 135.5H76" stroke="#262626" stroke-width="1" fill="none"/>
<g font-family="Liberation Sans" font-size="12" fill="#262626"><text x="69.0" y="740" text-anchor="middle">0</text><text x="163.4" y="740" text-anchor="middle">20</text><text x="257.8" y="740" text-anchor="middle">40</text><text x="352.2" y="740" text-anchor="middle">60</text><text x="446.6" y="740" text-anchor="middle">80</text><text x="541.0" y="740" text-anchor="middle">100</text><text x="635.4" y="740" text-anchor="middle">120</text><text x="729.8" y="740" text-anchor="middle">140</text><text x="824.2" y="740" text-anchor="middle">160</text><text x="65" y="729.3" text-anchor="end">-500</text><text x="65" y="610.5" text-anchor="end">0</text><text x="65" y="492.7" text-anchor="end">500</text><text x="65" y="374.9" text-anchor="end">1000</text><text x="65" y="257.1" text-anchor="end">1500</text><text x="65" y="139.3" text-anchor="end">2000</text></g>
<text x="449.3" y="130.2" text-anchor="middle" font-family="Liberation Sans" font-size="13.15" font-weight="bold" fill="#262626">Episode reward for rlwatertank with rlDDPGAgent</text>
<text x="449.3" y="754.9" text-anchor="middle" font-family="Liberation Sans" font-size="13" fill="#262626">Episode Number</text>
<text transform="translate(33.2 429.9) rotate(-90)" text-anchor="middle" font-family="Liberation Sans" font-size="13" fill="#262626">Episode Reward</text>
</svg>
  <!-- divider -->
  <!-- right panel -->
  <div class="a" style="left:855px;top:58px;width:353px;height:23px;background:#fff;border-bottom:1px solid #c0c0c0"></div>
  <div class="a t13" style="left:861px;top:62px">Training Progress</div>
  <div class="a" style="left:1189px;top:64px;width:2px;height:2px;background:#747474;box-shadow:0 4px 0 #747474,0 8px 0 #747474"></div>
  <div class="a" style="left:855px;top:82px;width:353px;height:695px;background:#f5f5f5"></div>
  <!-- progress -->
  <div class="a" style="left:865px;top:96px;width:213px;height:15px;background:#fff"></div>
  <div class="a" style="left:865px;top:96px;width:6px;height:15px;background:#2b87db"></div>
  <div class="btn" style="left:1088px;top:91px;width:110px;height:24px;line-height:22px;color:#ababab;background:#f5f5f5;border-color:#c8c8c8">Training stopped</div>
  <div class="a t12" style="left:865px;top:127px">Episode number:</div>
  <div class="a t12" style="left:1019px;top:127px">160/5000</div>
  <div class="a t12" style="left:865px;top:152px">Start time:</div>
  <div class="a t12" style="left:1019px;top:152px">23-Mar-2024 12:51:07</div>
  <div class="a t12" style="left:865px;top:177px">Duration:</div>
  <div class="a t12" style="left:1019px;top:177px">00:10:27</div>
  <div class="a t12" style="left:865px;top:202px">Final result:</div>
  <div class="a t12" style="left:1019px;top:202px">Training finished after all agents</div>
  <div class="a t12" style="left:1019px;top:216px">reached stop training criteria.</div>
  <!-- Training information panel -->
  <div class="panel" style="left:865px;top:243px;width:333px;height:294px">
    <div class="ptitle">Training Information</div>
  </div>
  <div class="a" style="left:876px;top:273px;width:311px;height:95px;background:#fff;border:1px solid #7f7f7f"></div>
  <div class="a" style="left:877px;top:274px;width:309px;height:27px;background:#f5f5f5;border-bottom:1px solid #7f7f7f"></div>
  <div class="a" style="left:877px;top:301px;width:309px;height:24px;background:#2a8adb;border-bottom:1px solid #7f7f7f"></div>
  <div class="a" style="left:1031px;top:274px;width:1px;height:51px;background:#7f7f7f"></div>
  <div class="a t12" style="left:880px;top:281px;font-weight:bold">Agent</div>
  <div class="a t12" style="left:1035px;top:281px;font-weight:bold">Status</div>
  <div class="a t12" style="left:880px;top:304px;color:#fff">rlDDPGAgent</div>
  <div class="a t12" style="left:1035px;top:304px;color:#fff">Training finished</div>
  <div class="a t12" style="left:876px;top:379px;font-weight:bold">Episode Information (rlDDPGAgent):</div>
  <div class="a t12" style="left:876px;top:404px">Episode reward:</div>
  <div class="a t12" style="left:1020px;top:404px">2000</div>
  <div class="a t12" style="left:876px;top:429px">Average reward:</div>
  <div class="a t12" style="left:1020px;top:429px">1997.8</div>
  <div class="a t12" style="left:876px;top:454px">Episode Q0:</div>
  <div class="a t12" style="left:1020px;top:454px">14.7769</div>
  <div class="a t12" style="left:876px;top:479px">Evaluation Statistic</div>
  <div class="a t12" style="left:1020px;top:479px">2000</div>
  <div class="btn" style="left:1077px;top:503px;width:110px;height:23px;line-height:21px;border-color:#8a8a8a">More Details...</div>
  <!-- Plot options -->
  <div class="panel" style="left:865px;top:547px;width:333px;height:117px">
    <div class="ptitle">Plot Options</div>
  </div>
  <div class="cb" style="left:876px;top:579px"></div>
  <svg class="a" style="left:876px;top:579px" width="14" height="14"><path d="M2.3 6.6L5 10L10.8 3" stroke="#111" stroke-width="1.9" fill="none"/></svg>
  <div class="a t12" style="left:893px;top:578px">Show EpisodeQ0</div>
  <div class="cb" style="left:876px;top:606px"></div>
  <div class="a t12" style="left:893px;top:606px">Show last N episodes</div>
  <div class="a" style="left:1038px;top:603px;width:149px;height:20px;border:1px solid #cdcdcd;background:#f7f7f7;color:#a6a6a6;font-size:12px;text-align:right;padding-right:4px;line-height:18px">5000</div>
  <div class="cb" style="left:876px;top:636px"></div>
  <svg class="a" style="left:876px;top:636px" width="14" height="14"><path d="M2.3 6.6L5 10L10.8 3" stroke="#111" stroke-width="1.9" fill="none"/></svg>
  <div class="a t12" style="left:893px;top:635px">Show Evaluation statistic</div>
  <!-- legend -->
  <div class="a" style="left:865px;top:674px;width:333px;height:67px;border:1px solid #7f7f7f;background:#f5f5f5"></div>
  <div class="a" style="left:871px;top:680px;width:321px;height:55px;background:#fff"></div>
  <svg class="a" style="left:865px;top:674px" width="334" height="67">
    <path d="M12 20.5H52" stroke="#4dbeee" stroke-width="1"/><circle cx="32" cy="20.5" r="1.6" fill="#4dbeee"/>
    <path d="M147.5 20.5H187.5" stroke="#edb120" stroke-width="1"/><circle cx="167.5" cy="20.5" r="1.5" fill="#edb120"/>
    <path d="M12 41.5H52" stroke="#0072bd" stroke-width="1.5"/><circle cx="32" cy="41.5" r="1.7" fill="#0072bd"/>
    <path d="M167 36.5V47.5M161.5 42H172.5M163.1 38.1L170.9 45.9M163.1 45.9L170.9 38.1" stroke="#a2142f" stroke-width="0.8" fill="none"/>
  </svg>
  <div class="a t12" style="left:920px;top:687px">Episode reward</div>
  <div class="a t12" style="left:920px;top:709px">Average reward</div>
  <div class="a t12" style="left:1056px;top:687px">Episode Q0</div>
  <div class="a t12" style="left:1056px;top:702px">Evaluation Statistic</div>
  <div class="a t12" style="left:1056px;top:716px">(MeanEpisodeReward)</div>
  <!-- status bar -->
  <div class="a" style="left:0;top:776px;width:854px;height:1px;background:#fcfcfc"></div>
  <div class="a" style="left:855px;top:776px;width:353px;height:1px;background:#fcfcfc"></div>
  <div class="a" style="left:0;top:777px;width:854px;height:1px;background:#808080"></div>
  <div class="a" style="left:855px;top:777px;width:353px;height:1px;background:#c2c2c2"></div>
  <div class="a" style="left:0;top:778px;width:1208px;height:22px;background:#e6e6e6"></div>
  <div class="a" style="left:853px;top:81px;width:1px;height:696px;background:#fcfcfc"></div>
  <div class="a" style="left:855px;top:81px;width:1px;height:696px;background:#fcfcfc"></div>
  <div class="a" style="left:853px;top:778px;width:1px;height:22px;background:#eeeeee"></div>
  <div class="a" style="left:855px;top:778px;width:1px;height:22px;background:#eeeeee"></div>
  <div class="a" style="left:854px;top:58px;width:1px;height:742px;background:#808080"></div>
  <svg class="a" style="left:1193px;top:783px" width="12" height="13"><path d="M0 0.5L7 6.5L0 12.5Z" fill="#8a8a8a"/><rect x="7.5" y="0.5" width="2" height="12" fill="#8a8a8a"/></svg>
</div>
</body></html>
